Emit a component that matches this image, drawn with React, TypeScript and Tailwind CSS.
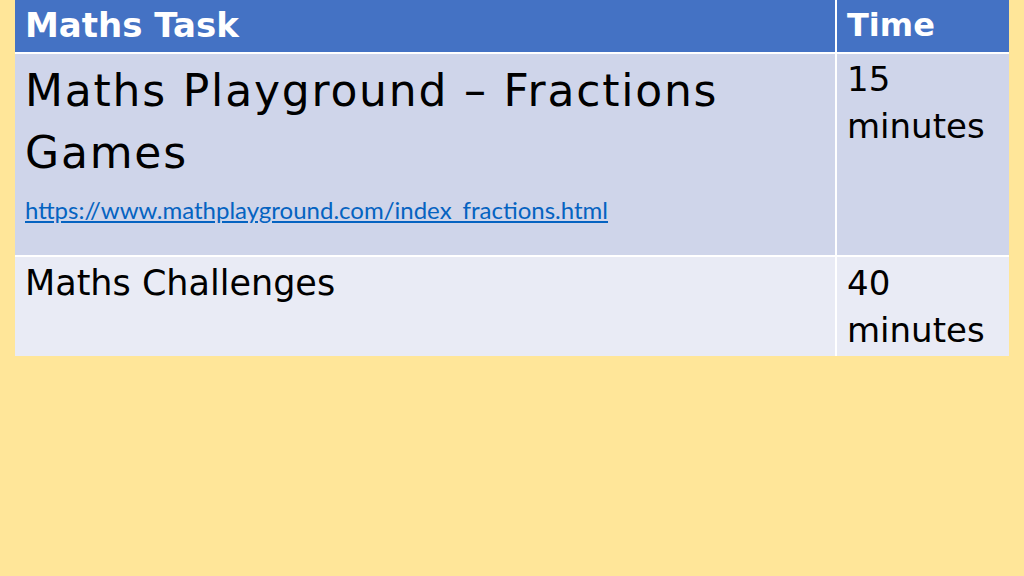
const comic = { fontFamily: '"DejaVu Sans", sans-serif' };

export default function App() {
  return (
    <div className="w-[1024px] h-[576px] bg-[#FFE699] overflow-hidden">
      <div
        className="ml-[15px] w-[994px] bg-white grid grid-cols-[820px_172px] grid-rows-[52px_201px_99px] gap-[2px]"
        style={comic}
      >
        <div className="bg-[#4472C4] pl-[10px] pt-[5px] text-white font-bold text-[34px] leading-[40px]">
          Maths Task
        </div>
        <div className="bg-[#4472C4] pl-[10px] pt-[5px] text-white font-bold text-[32px] leading-[40px]">
          Time
        </div>

        <div className="bg-[#CFD5EA] pl-[10px] pt-[6px] text-black">
          <div className="text-[44px] leading-[62px] tracking-[1.8px]">
            Maths Playground – Fractions
            <br />
            Games
          </div>
          <div className="mt-[12px]">
            <a
              href="#"
              className="text-[#0563C1] underline text-[24px] leading-[28px]"
              style={{ fontFamily: 'Lato, "Liberation Sans", sans-serif' }}
            >
              https://www.mathplayground.com/index_fractions.html
            </a>
          </div>
        </div>
        <div className="bg-[#CFD5EA] pl-[10px] pt-[2px] text-black text-[34px] leading-[47px]">
          15 minutes
        </div>

        <div className="bg-[#E9EBF5] pl-[10px] pt-[3px] text-black text-[35px] leading-[47px]">
          Maths Challenges
        </div>
        <div className="bg-[#E9EBF5] pl-[10px] pt-[3px] text-black text-[34px] leading-[47px]">
          40 minutes
        </div>
      </div>
    </div>
  );
}
